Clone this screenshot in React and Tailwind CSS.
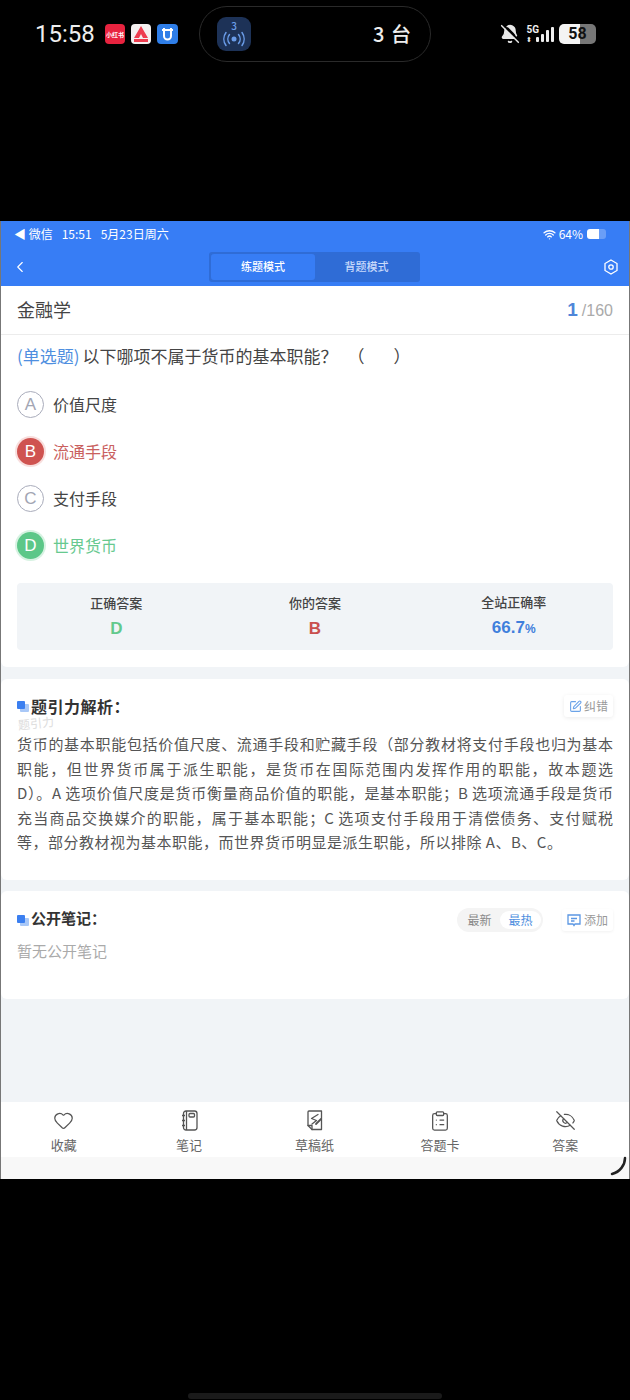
import { Heart, EyeOff, ClipboardList, SquarePen, ChevronLeft, Wifi, BellOff } from "lucide-react";

const font = "font-['Noto_Sans_CJK_SC','Noto_Sans',sans-serif]";

const explainLines = [
  "货币的基本职能包括价值尺度、流通手段和贮藏手段（部分教材将支付手段也归为基本",
  "职能，但世界货币属于派生职能，是货币在国际范围内发挥作用的职能，故本题选",
  "D）。A 选项价值尺度是货币衡量商品价值的职能，是基本职能；B 选项流通手段是货币",
  "充当商品交换媒介的职能，属于基本职能；C 选项支付手段用于清偿债务、支付赋税",
];

const NotebookIcon = () => (
  <svg width="17" height="21" viewBox="0 0 17 21" fill="none" stroke="#555" strokeWidth="1.300">
    <rect x="2.500" y="1" width="13.500" height="19" rx="2.500" />
    <path d="M5.500 1v19M1 5.500h3M1 10.500h3M1 15.500h3" />
    <rect x="8" y="3.500" width="5.500" height="3.500" rx="1" />
  </svg>
);

const DraftIcon = () => (
  <svg width="16" height="21" viewBox="0 0 16 21" fill="none" stroke="#555" strokeWidth="1.300" strokeLinejoin="round" strokeLinecap="round">
    <path d="M2 1h12.500v18.500H5L1 15.500V2a1 1 0 0 1 1-1z" />
    <path d="M1 15.500h4v4" />
    <path d="M11 4.500 4.500 8.500 9.500 10.500 5 14" />
    <path d="m9 14 5-5" strokeWidth="1.800" />
  </svg>
);

const SectionMark = () => (
  <span className="relative block h-[11px] w-[14px] shrink-0">
    <span className="absolute left-[3px] top-[3px] h-[8px] w-[9px] rounded-[1px] bg-[#a9c8f7]" />
    <span className="absolute left-0 top-0 h-[8px] w-[8px] rounded-[1px] bg-[#3b7ff0]" />
  </span>
);

const Option = ({ letter, text, state }) => {
  const circle =
    state === "wrong"
      ? "bg-[#cf5350] text-white ring-[2px] ring-[#f8dedd]"
      : state === "right"
        ? "bg-[#5cc788] text-white ring-[2px] ring-[#d7f2e2]"
        : "border border-[#a9acbb] text-[#a2a5b3]";
  const label = state === "wrong" ? "text-[#c9605e]" : state === "right" ? "text-[#67c98f]" : "text-[#444]";
  return (
    <div className="flex h-[47px] items-center gap-[9px]">
      <span className={`flex h-[27px] w-[27px] items-center justify-center rounded-full font-['Liberation_Sans',sans-serif] text-[17px] ${circle}`}>{letter}</span>
      <span className={`pb-[2px] text-[16px] ${label}`}>{text}</span>
    </div>
  );
};

const Stat = ({ label, children }) => (
  <div className="flex flex-1 flex-col items-center">
    <span className="pb-[1px] text-[13px] font-medium leading-[20px] text-[#444]">{label}</span>
    <span className="mt-[3px] font-['Liberation_Sans',sans-serif] text-[17px] font-bold leading-[24px]">{children}</span>
  </div>
);

const TabItem = ({ icon, label }) => (
  <div className="flex flex-1 flex-col items-center">
    <span className="flex h-[24px] items-center">{icon}</span>
    <span className="mt-[3px] text-[13px] leading-[18px] text-[#666]">{label}</span>
  </div>
);

export default function App() {
  return (
    <div className={`flex h-[1400px] w-[630px] flex-col overflow-hidden bg-black ${font}`}>
      {/* phone status bar */}
      <div className="h-[221px] shrink-0 pl-[35px] pr-[34px] pt-[6px]">
        <div className="flex h-[56px] items-center">
          <span className="w-[70px] font-['Roboto',sans-serif] text-[24px] leading-none text-[#eee]">15:58</span>
          <div className="flex w-[94px] items-center gap-[6px]">
            <span className="flex h-[20px] w-[20px] items-center justify-center rounded-[4px] bg-[#e8233f] text-[6px] font-bold text-white">小红书</span>
            <span className="flex h-[20px] w-[20px] items-center justify-center rounded-[4px] bg-[#f4f0f0]">
              <svg width="16" height="16" viewBox="0 0 16 16">
                <path d="M8 0 15 12H10L8 8 6 12H1z" fill="#ee3d4f" />
                <rect x="1" y="13" width="14" height="3" fill="#ee3d4f" />
              </svg>
            </span>
            <span className="flex h-[20px] w-[21px] items-center justify-center rounded-[4px] bg-[#2f7ee8]">
              <svg width="13" height="15" viewBox="0 0 13 15" fill="none" stroke="white" strokeWidth="2">
                <path d="M3 1v8a3.500 3.500 0 0 0 7 0V1M1 3h11" />
              </svg>
            </span>
          </div>
          <div className="flex h-[56px] w-[232px] items-center rounded-full border border-[#2a2a2a] pl-[17px] pr-[18px]">
            <span className="flex h-[34px] w-[34px] flex-col items-center justify-center rounded-[9px] bg-[#1d3257] text-[#6a9ce8]">
              <span className="text-[10px] font-medium leading-[10px]">3</span>
              <svg width="24" height="16" viewBox="0 0 24 16" fill="none" stroke="#6a9ce8" strokeWidth="1.500" strokeLinecap="round">
                <circle cx="12" cy="8" r="2.500" fill="#6a9ce8" stroke="none" />
                <path d="M7.500 3.500a7 7 0 0 0 0 9M16.500 3.500a7 7 0 0 1 0 9M4 1.500a11 11 0 0 0 0 13M20 1.500a11 11 0 0 1 0 13" />
              </svg>
            </span>
            <span className="ml-auto text-[20px] font-medium tracking-[1px] text-[#eee]">3 台</span>
          </div>
          <div className="ml-auto flex items-center">
            <BellOff size={20} color="#e8e8e8" fill="#e8e8e8" strokeWidth={1.800} />
            <div className="ml-[6px] flex flex-col">
              <span className="font-['Roboto',sans-serif] text-[10px] font-bold leading-[11px] text-[#eee]">5G</span>
              <span className="text-[7px] leading-[9px] text-[#eee]">⬍</span>
            </div>
            <div className="ml-[-3px] flex items-end gap-[2px]">
              <span className="h-[5px] w-[3px] rounded-[1px] bg-[#eee]" />
              <span className="h-[8px] w-[3px] rounded-[1px] bg-[#eee]" />
              <span className="h-[12px] w-[3px] rounded-[1px] bg-[#eee]" />
              <span className="h-[15px] w-[3px] rounded-[1px] bg-[#eee]" />
            </div>
            <div className="ml-[5px] flex h-[20px] w-[37px] items-center justify-center rounded-[5px] bg-[linear-gradient(90deg,#f4f4f4_58%,#777_58%)] font-['Roboto',sans-serif] text-[16px] font-bold text-[#111]">58</div>
          </div>
        </div>
      </div>

      {/* app frame */}
      <div className="flex h-[958px] shrink-0 flex-col border-x border-[#777] bg-[#f1f4f7]">
        <div className="h-[65px] shrink-0 bg-[#377df5] text-white">
          <div className="flex h-[26px] items-center pl-[13px] pr-[23px] text-[12px]">
            <span>◀ 微信</span>
            <span className="ml-[9px]">15:51</span>
            <span className="ml-[9px]">5月23日周六</span>
            <Wifi size={13} className="ml-auto" strokeWidth={2.500} />
            <span className="ml-[3px]">64%</span>
            <span className="ml-[4px] block h-[10px] w-[19px] rounded-[3px] bg-[linear-gradient(90deg,#fff_64%,#6a9ef7_64%)]" />
          </div>
          <div className="flex h-[39px] items-center px-[10px]">
            <ChevronLeft size={18} strokeWidth={1.500} />
            <div className="ml-[180px] flex h-[30px] w-[211px] rounded-[3px] bg-[#2f6cd6] p-[2px] text-[11px] font-medium">
              <span className="flex w-[104px] items-center justify-center rounded-[3px] bg-[#377df5]">练题模式</span>
              <span className="flex flex-1 items-center justify-center text-[#c9dafb]">背题模式</span>
            </div>
            <svg className="ml-auto mr-[1px]" width="14" height="16" viewBox="0 0 14 16" fill="none" stroke="white" strokeWidth="1.300">
              <path d="M7 1 13 4.500v7L7 15 1 11.500v-7z" />
              <circle cx="7" cy="8" r="2.200" />
            </svg>
          </div>
        </div>

        <div className="flex h-[49px] shrink-0 items-center justify-between border-b border-[#ececec] bg-white px-[16px]">
          <span className="pb-[1px] text-[18px] text-[#444]">金融学</span>
          <span className="font-['Liberation_Sans',sans-serif] text-[16px] text-[#aaa]">
            <span className="mr-[4px] text-[19px] font-bold text-[#4f86d9]">1</span>/160
          </span>
        </div>

        <div className="flex h-[332px] shrink-0 flex-col rounded-b-[6px] bg-white px-[16px]">
          <div className="flex h-[42px] shrink-0 items-center text-[17px] text-[#444]">
            <span className="mr-[3px] text-[#4f8fe0]">(单选题)</span>以下哪项不属于货币的基本职能？
            <span className="ml-[10px]">（</span><span className="w-[29px]" />）
          </div>
          <div className="mt-[4px]">
            <Option letter="A" text="价值尺度" />
            <Option letter="B" text="流通手段" state="wrong" />
            <Option letter="C" text="支付手段" />
            <Option letter="D" text="世界货币" state="right" />
          </div>
          <div className="mt-[14px] flex h-[67px] shrink-0 items-center rounded-[4px] bg-[#f1f4f7]">
            <Stat label="正确答案"><span className="text-[#62c98d]">D</span></Stat>
            <Stat label="你的答案"><span className="text-[#c9504e]">B</span></Stat>
            <Stat label="全站正确率">
              <span className="text-[#3f7fdc]">66.7<span className="text-[12px]">%</span></span>
            </Stat>
          </div>
        </div>

        <div className="mt-[12px] h-[201px] shrink-0 rounded-[6px] bg-white px-[16px] pt-[14px]">
          <div className="relative flex h-[26px] items-center">
            <SectionMark />
            <span className="text-[16px] font-bold leading-[18px] tracking-[0.500px] text-[#333]">题引力解析：</span>
            <span className="absolute left-[1px] top-[24px] -rotate-6 text-[12px] leading-none text-[#ddd]">题引力</span>
            <span className="ml-auto flex h-[22px] items-center gap-[2px] rounded-[3px] px-[5px] text-[12px] text-[#999] shadow-[0_1px_4px_rgba(0,0,0,0.08)]">
              <SquarePen size={13} color="#6ba3e8" />纠错
            </span>
          </div>
          <div className="mt-[13px] text-[15px] leading-[24.500px] text-[#555]">
            {explainLines.map((line) => (
              <div key={line} className="whitespace-nowrap [text-align-last:justify]">{line}</div>
            ))}
            <div className="tracking-[0.500px]">等，部分教材视为基本职能，而世界货币明显是派生职能，所以排除 A、B、C。</div>
          </div>
        </div>

        <div className="mt-[11px] h-[108px] shrink-0 rounded-[6px] bg-white px-[16px] pt-[16px]">
          <div className="flex h-[26px] items-center">
            <SectionMark />
            <span className="pb-[3px] text-[15px] font-bold text-[#333]">公开笔记：</span>
            <div className="ml-auto flex h-[24px] w-[86px] items-center rounded-full bg-[#f4f4f4] p-[2px] text-[12px]">
              <span className="flex-1 text-center text-[#888]">最新</span>
              <span className="flex-1 rounded-full bg-white text-center text-[#4f8fe0]">最热</span>
            </div>
            <span className="ml-[19px] flex h-[22px] items-center gap-[3px] rounded-[3px] px-[5px] text-[12px] text-[#999] shadow-[0_1px_3px_rgba(0,0,0,0.06)]">
              <svg width="14" height="13" viewBox="0 0 14 13" fill="none" stroke="#5b97e3" strokeWidth="1.300">
                <path d="M1 1h12v9H8l-1 1.500L6 10H1z" />
                <path d="M4 4.500h6M4 7h3.500" />
              </svg>
              添加
            </span>
          </div>
          <div className="mt-[7px] text-[15px] text-[#aaa]">暂无公开笔记</div>
        </div>

        <div className="mt-auto flex h-[55px] shrink-0 items-center bg-white pr-[1px] pt-[3px]">
          <TabItem icon={<Heart size={21} color="#555" strokeWidth={1.400} />} label="收藏" />
          <TabItem icon={<NotebookIcon />} label="笔记" />
          <TabItem icon={<DraftIcon />} label="草稿纸" />
          <TabItem icon={<ClipboardList size={22} color="#555" strokeWidth={1.400} />} label="答题卡" />
          <TabItem icon={<EyeOff size={21} color="#555" strokeWidth={1.400} />} label="答案" />
        </div>
        <div className="relative h-[22px] shrink-0 bg-[#f8f8f8]">
          <svg className="absolute bottom-[3px] right-[1px]" width="19" height="20" viewBox="0 0 19 20" fill="none" stroke="#222" strokeWidth="2.500" strokeLinecap="round">
            <path d="M16 2c0 7-5 14-13 16" />
          </svg>
        </div>
      </div>

      {/* home indicator */}
      <div className="flex flex-1 items-end justify-center pb-[1px]">
        <span className="block h-[6px] w-[254px] rounded-full bg-[#1a1a1a]" />
      </div>
    </div>
  );
}
